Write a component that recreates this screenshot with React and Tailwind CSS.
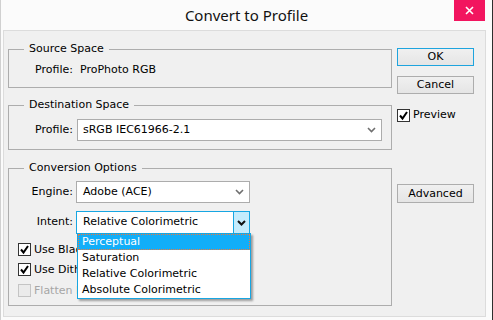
import React from 'react';

const Chevron = ({ color = '#6f6f6f', strong = false }) => (
  <svg width="9" height="6" viewBox="0 0 9 6">
    <polyline points="1,1 4.5,4.5 8,1" fill="none" stroke={color} strokeWidth={strong ? 2 : 1.6} />
  </svg>
);

const Check = () => (
  <svg width="11" height="11" viewBox="0 0 11 11">
    <polyline points="2,5.5 4.5,8.5 9,2" fill="none" stroke="#000" strokeWidth="2" />
  </svg>
);

const CheckBox = ({ checked, disabled, label }) => (
  <div className="flex items-center h-[13px]">
    <div
      className={
        disabled
          ? 'w-[13px] h-[13px] border border-[#c4c4c4] bg-[#ebebeb]'
          : 'w-[13px] h-[13px] border border-[#333] bg-white flex items-center justify-center'
      }
    >
      {checked && <Check />}
    </div>
    <span className={disabled ? 'ml-[3px] text-[#a6a6a6]' : 'ml-[3px]'}>{label}</span>
  </div>
);

const Group = ({ title, className, children }) => (
  <fieldset className={'border border-[#adadad] px-0 ' + className}>
    <legend className="ml-[15px] px-[5px] leading-[14px]">{title}</legend>
    {children}
  </fieldset>
);

const Button = ({ children, primary, className = '' }) => (
  <div
    className={
      'w-[77px] h-[18px] flex items-center justify-center leading-[14px] bg-gradient-to-b from-[#f0f0f0] to-[#e5e5e5] border ' +
      (primary ? 'border-[#1ea4de] ' : 'border-[#adadad] ') +
      className
    }
  >
    {children}
  </div>
);

const intents = ['Perceptual', 'Saturation', 'Relative Colorimetric', 'Absolute Colorimetric'];

export default function App() {
  return (
    <div className="w-[493px] h-[320px] bg-[#fbfbfb] border-l border-l-[#d0d0d0] border-r border-r-[#2e2e2e] font-['DejaVu_Sans',sans-serif] text-[11px] text-black overflow-hidden">
      {/* Title bar */}
      <div className="relative h-[30px] flex items-center justify-center">
        <span className="font-['Noto_Sans',sans-serif] text-[15px] text-[#111] pt-[1px]">Convert to Profile</span>
        <div className="absolute right-[7px] top-0 w-[31px] h-[21px] bg-[#f2155f] flex items-center justify-center">
          <svg width="9" height="9" viewBox="0 0 9 9">
            <path d="M1 1L8 8M8 1L1 8" stroke="#fff" strokeWidth="1.6" />
          </svg>
        </div>
      </div>

      {/* Body */}
      <div className="ml-[2px] w-[483px] h-[287px] border border-[#dcdcdc] bg-[#f0f0f0] flex pl-[4px]">
        {/* Left column */}
        <div className="w-[384px] flex flex-col">
          <Group title="Source Space" className="mt-[11px] pb-[10px]">
            <div className="flex mt-[7px] leading-[14px]">
              <span className="w-[64px] text-right">Profile:</span>
              <span className="ml-[7px]">ProPhoto RGB</span>
            </div>
          </Group>

          <Group title="Destination Space" className="mt-[10px] pb-[8px]">
            <div className="flex items-center mt-[7px]">
              <span className="w-[64px] text-right">Profile:</span>
              <div className="ml-[4px] w-[305px] h-[22px] bg-white border border-[#acacac] flex items-center justify-between pl-[5px] pr-[5px]">
                <span>sRGB IEC61966-2.1</span>
                <Chevron />
              </div>
            </div>
          </Group>

          <Group title="Conversion Options" className="mt-[11px] pb-[8px]">
            <div className="flex items-center mt-[6px]">
              <span className="w-[64px] text-right">Engine:</span>
              <div className="ml-[3px] w-[174px] h-[22px] bg-white border border-[#acacac] flex items-center justify-between pl-[6px] pr-[5px]">
                <span>Adobe (ACE)</span>
                <Chevron />
              </div>
            </div>

            <div className="flex items-center mt-[8px]">
              <span className="w-[64px] text-right">Intent:</span>
              <div className="relative ml-[3px] w-[174px] h-[23px] bg-white border border-[#17a6e2] flex items-center">
                <span className="flex-1 pl-[6px]">Relative Colorimetric</span>
                <div className="w-[16px] h-full border-l border-[#17a6e2] bg-[#c5ecfc] flex items-center justify-center">
                  <Chevron color="#111" strong />
                </div>
                {/* open list */}
                <div className="absolute left-0 top-[21px] w-[174px] bg-white border border-[#17a6e2] shadow-[2px_2px_2px_rgba(0,0,0,0.35)] z-10">
                  {intents.map((it, i) => (
                    <div
                      key={it}
                      className={
                        i === 0
                          ? 'h-[16px] leading-[14px] pl-[3px] bg-[#12aef8] text-white border border-dotted border-[#f07a3a]'
                          : 'h-[16px] leading-[16px] pl-[4px]'
                      }
                    >
                      {it}
                    </div>
                  ))}
                </div>
              </div>
            </div>

            <div className="pl-[9px] mt-[9px] flex flex-col gap-[7px] leading-[14px]">
              <CheckBox checked label="Use Black Point Compensation" />
              <div className="mt-[0px]">
                <CheckBox checked label="Use Dither" />
              </div>
              <div className="mt-[1px]">
                <CheckBox disabled label="Flatten Image" />
              </div>
            </div>
          </Group>
        </div>

        {/* Right column */}
        <div className="ml-[5px] flex flex-col">
          <Button primary className="mt-[17px]">OK</Button>
          <Button className="mt-[10px]">Cancel</Button>
          <div className="mt-[15px]">
            <CheckBox checked label="Preview" />
          </div>
          <Button className="mt-[62px] h-[19px]">Advanced</Button>
        </div>
      </div>
    </div>
  );
}
